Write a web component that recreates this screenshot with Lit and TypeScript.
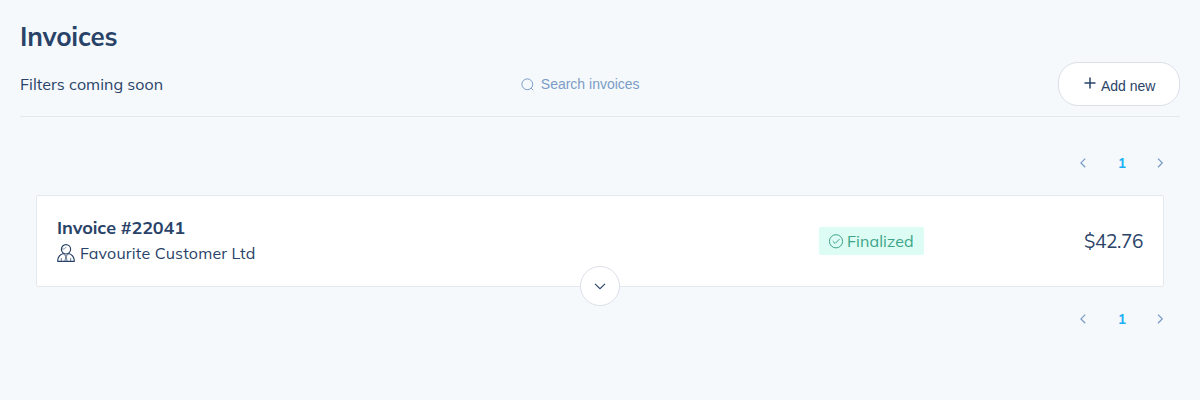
import { LitElement, html, css, svg } from "lit";
import { customElement } from "lit/decorators.js";

const left = svg`<path d="M5.2 .6 L1 4.9 L5.2 9.2"/>`;
const right = svg`<path d="M1 .6 L5.2 4.9 L1 9.2"/>`;

@customElement("invoice-pager")
export class InvoicePager extends LitElement {
  static styles = css`
    :host { display: flex; justify-content: flex-end; }
    .pager { display: flex; align-items: center; height: 32px; }
    .cell { width: 32px; height: 32px; display: flex; align-items: center; justify-content: center; }
    .page { margin: 0 6px 0 7px; font: 700 14px/32px Mulish, "Noto Sans", sans-serif; color: #1ab0f5; }
    svg { fill: none; stroke: #7b9cc6; stroke-width: 1.3; display: block; }
  `;
  render() {
    return html`<div class="pager">
      <div class="cell"><svg width="6" height="10">${left}</svg></div>
      <div class="cell page">1</div>
      <div class="cell"><svg width="6" height="10">${right}</svg></div>
    </div>`;
  }
}

@customElement("app-root")
export class AppRoot extends LitElement {
  static styles = css`
    * { box-sizing: border-box; }
    :host { display: block; height: 400px; background: #f5f9fc; color: #294368; padding: 20px 20px 0; box-sizing: border-box; font-family: Muli, Mulish, Nunito, Lato, sans-serif; }
    svg { display: block; fill: none; stroke: currentColor; }
    h1 { margin: 0; font-size: 26px; line-height: 34px; font-weight: 700; height: 42px; letter-spacing: -.22px; }
    .bar { height: 55px; padding-bottom: 11px; border-bottom: 1px solid #e2e8ee; display: grid; grid-template-columns: 501.3px 1fr auto; align-items: center; }
    .filters { font-size: 16px; letter-spacing: .05px; }
    .search { display: flex; align-items: center; gap: 6.5px; color: #7b9cc6; font: 14px "Liberation Sans", Arial, sans-serif; }
    .add { width: 122px; height: 44px; border: 1px solid #dcdfe8; border-radius: 20px; background: #fff; color: #294368; font: 14px/16px "Liberation Sans", Arial, sans-serif; display: flex; align-items: center; padding: 0 0 0 25px; gap: 5px; }
    .add svg { margin-top: -3px; }
    .add span { margin-top: 4px; }
    .top { margin-top: 30px; padding-right: 4px; }
    .bottom { margin-top: 16px; padding-right: 4px; }
    .card { position: relative; margin: 16px 16px 0; height: 92px; border: 1px solid #e3e8ed; border-radius: 2px; background: #fff; padding: 0 20px; display: grid; grid-template-columns: 762px 1fr auto; align-items: center; }
    .title { font-size: 18px; line-height: 24px; font-weight: 700; letter-spacing: -.1px; }
    .customer { display: flex; gap: 5px; align-items: center; font-size: 16px; line-height: 26px; letter-spacing: .18px; }
    .tag { width: 105px; height: 28px; border-radius: 2px; background: #dcfcf4; color: #3da587; display: flex; align-items: center; gap: 3px; padding-left: 10px; font-size: 16px; letter-spacing: .1px; }
    .amount { font-size: 19px; letter-spacing: -.4px; }
    .toggle { position: absolute; left: 543px; top: 70px; width: 40px; height: 40px; border: 1px solid #dcdfe8; border-radius: 50%; background: #fff; display: flex; align-items: center; justify-content: center; padding: 0; color: #294368; }
  `;
  render() {
    return html`
      <h1>Invoices</h1>
      <div class="bar">
        <div class="filters">Filters coming soon</div>
        <div class="search">
          <svg width="13" height="13"><circle cx="6.3" cy="6.3" r="5.4"/><path d="M10.2 10.2 L12.2 12.2"/></svg>
          <span>Search invoices</span>
        </div>
        <button class="add"><svg width="12" height="12" stroke-width="1.5"><path d="M6 .5V11.5M.5 6H11.5"/></svg><span>Add new</span></button>
      </div>
      <invoice-pager class="top"></invoice-pager>
      <div class="card">
        <div>
          <div class="title">Invoice #22041</div>
          <div class="customer">
            <svg width="18" height="18" stroke-width="1.2"><ellipse cx="9" cy="5.3" rx="4.6" ry="4.7"/><path d="M5 5C7.2 5.3 8.4 4.4 9 3.2" stroke-width=".6"/><path d="M6.3 9.5C3 10.6.7 13.5.7 17.3H17.3C17.3 13.5 15 10.6 11.7 9.5" stroke-linejoin="round"/><path d="M6.3 10L9 12L11.7 10M9 12L7.9 17M9 12L10.1 17M4.3 14V17M13.7 14V17" stroke-width=".7"/></svg>
            <span>Favourite Customer Ltd</span>
          </div>
        </div>
        <div class="tag">
          <svg width="15" height="15"><circle cx="7" cy="7.3" r="6.6"/><path d="M3.7 7.2L6.1 9.5L10.5 5.1"/></svg>
          <span>Finalized</span>
        </div>
        <div class="amount">$42.76</div>
        <button class="toggle"><svg width="12" height="7" stroke-width="1.1"><path d="M1 .9L6 5.7L11 .9"/></svg></button>
      </div>
      <invoice-pager class="bottom"></invoice-pager>
    `;
  }
}
